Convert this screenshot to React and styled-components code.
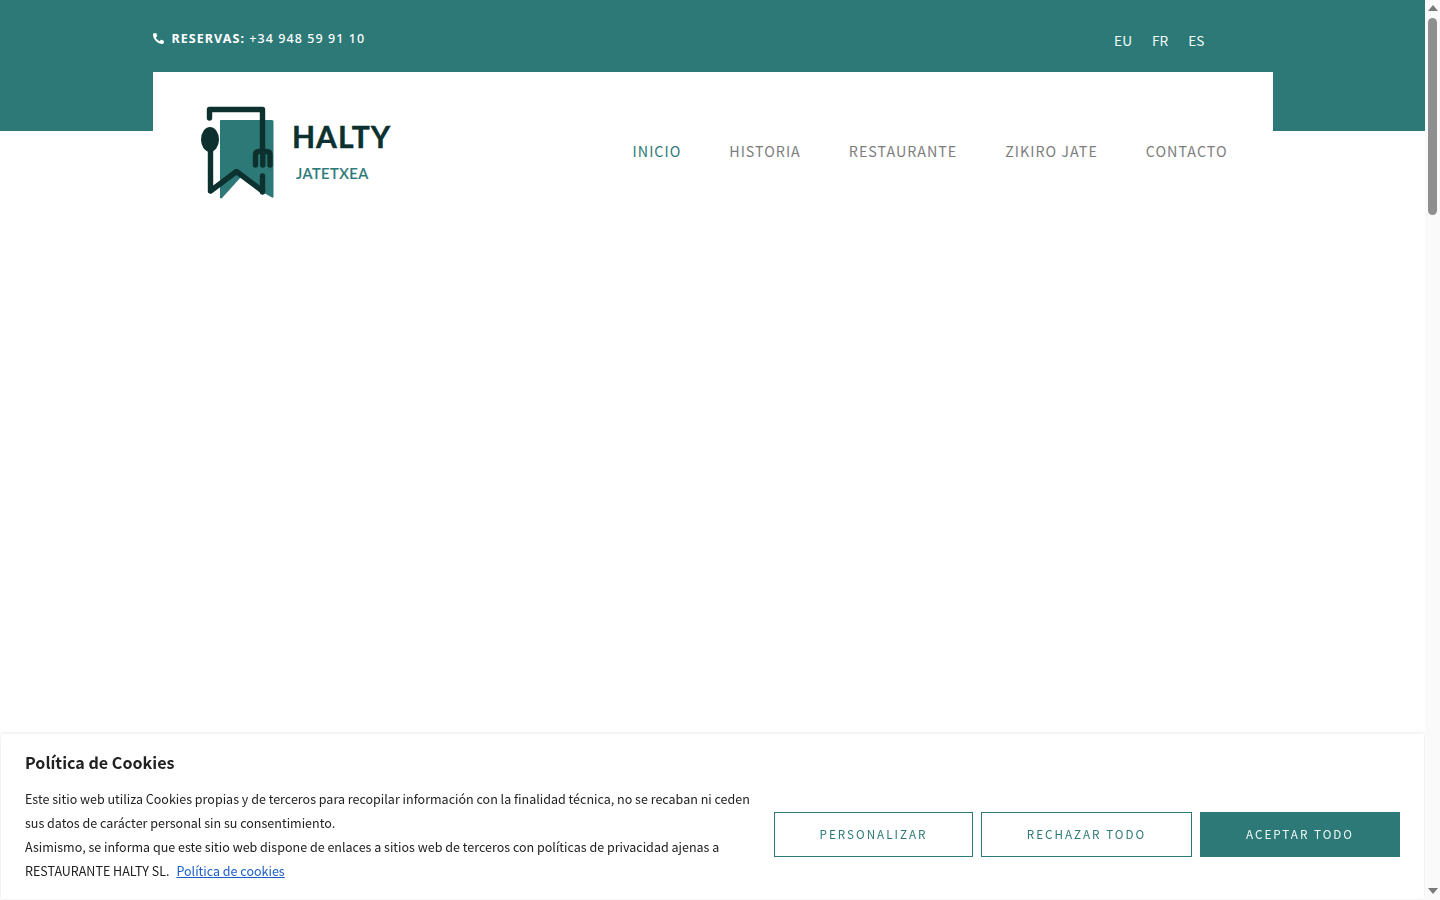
import styled, { createGlobalStyle } from 'styled-components';

const TEAL = '#2d7977';
const DARK = '#0c312e';
const BODY_FONT = '"Noto Sans CJK JP", "Noto Sans", sans-serif';

const navItems = ['INICIO', 'HISTORIA', 'RESTAURANTE', 'ZIKIRO JATE', 'CONTACTO'];
const languages = ['EU', 'FR', 'ES'];

const PhoneIcon = () => (
  <svg width="11" height="11" viewBox="0 0 512 512" fill="#fff">
    <path d="M493 24 389 0c-11-3-23 3-27 14l-48 112c-4 10-1 21 7 28l60 50c-36 77-99 140-176 176l-50-60c-7-8-18-11-28-7L14 361c-11 5-17 16-14 28l24 104c3 11 12 19 24 19 256 0 464-207 464-464 0-12-8-21-19-24z" transform="matrix(-1 0 0 1 512 0)" />
  </svg>
);

const LogoMark = () => (
  <svg width="85" height="105" viewBox="195 100 85 105">
    <path d="M221 120H272A1.500 1.500 0 0 1 273.500 121.500V196.500A1 1 0 0 1 272 197.500L264 193L241.500 176.500L222.500 197.500A1 1 0 0 1 220 196.500V121A1 1 0 0 1 221 120Z" fill={TEAL} />
    <g fill="none" stroke={DARK} strokeWidth="5.400" strokeLinecap="round" strokeLinejoin="round">
      <path d="M209.500 118V109.500H262.500V150" />
      <path d="M210.500 145V191L236.500 171.500L262.500 191" />
      <path d="M262.500 176V192" />
      <path d="M255.500 165V155Q255.500 151.500 259 151.500H266.500Q270 151.500 270 155V165" />
      <path d="M262.800 153V165" />
    </g>
    <ellipse cx="210" cy="139.500" rx="9" ry="12.500" fill={DARK} />
  </svg>
);

const App = () => (
  <>
    <GlobalStyle />
    <Band>
      <Container>
        <TopBar>
          <Phone>
            <PhoneIcon />
            <span>
              <strong>RESERVAS:</strong> +34 948 59 91 10
            </span>
          </Phone>
          <Languages>
            {languages.map(lang => (
              <LanguageLink key={lang}>{lang}</LanguageLink>
            ))}
          </Languages>
        </TopBar>
        <Header>
          <Logo>
            <LogoMark />
            <LogoText>
              <LogoName>HALTY</LogoName>
              <LogoSub>JATETXEA</LogoSub>
            </LogoText>
          </Logo>
          <Nav>
            {navItems.map((item, index) => (
              <NavLink key={item} $active={index === 0}>
                {item}
              </NavLink>
            ))}
          </Nav>
        </Header>
      </Container>
    </Band>
    <CookieBar>
      <CookieText>
        <CookieTitle>Política de Cookies</CookieTitle>
        <CookieCopy>
          Este sitio web utiliza Cookies propias y de terceros para recopilar información con la finalidad técnica, no se recaban ni ceden sus datos de carácter personal sin su consentimiento.
          <br />
          Asimismo, se informa que este sitio web dispone de enlaces a sitios web de terceros con políticas de privacidad ajenas a RESTAURANTE HALTY SL.
          <CookieLink>Política de cookies</CookieLink>
        </CookieCopy>
      </CookieText>
      <CookieButtons>
        <CookieButton $width={199}>PERSONALIZAR</CookieButton>
        <CookieButton $width={211}>RECHAZAR TODO</CookieButton>
        <CookieButton $width={200} $primary>ACEPTAR TODO</CookieButton>
      </CookieButtons>
    </CookieBar>
    <ScrollTrack>
      <ScrollArrow />
      <ScrollThumb />
      <ScrollArrow $down />
    </ScrollTrack>
  </>
);

const GlobalStyle = createGlobalStyle`
  body {
    margin: 0;
    min-height: 100vh;
    padding-right: 15px;
    background: #fff;
    font-family: ${BODY_FONT};
  }
`;

const Band = styled.div`
  height: 131px;
  background: ${TEAL};
`;

const Container = styled.div`
  width: 1120px;
  margin: 0 auto;
`;

const TopBar = styled.div`
  height: 72px;
  display: flex;
  justify-content: space-between;
  color: #fff;
`;

const Phone = styled.div`
  display: flex;
  align-items: center;
  gap: 8px;
  height: 76px;
  font-family: "Noto Sans", sans-serif;
  font-size: 12.5px;
  font-weight: 500;
  letter-spacing: 1.06px;

  & strong {
    font-weight: 700;
  }
`;

const Languages = styled.div`
  display: flex;
  gap: 20px;
  padding: 30px 68px 0 0;
`;

const LanguageLink = styled.a`
  font-size: 13.7px;
  line-height: 20px;
  color: #f2fbfa;
`;

const Header = styled.header`
  height: 160px;
  padding: 0 45px 0 48px;
  display: flex;
  justify-content: space-between;
  background: #fff;
`;

const Logo = styled.div`
  display: flex;
  align-items: flex-start;
  padding-top: 28px;
  margin-left: -6px;
`;

const LogoText = styled.div`
  display: flex;
  flex-direction: column;
  margin-left: 12.5px;
  padding-top: 18px;
`;

const LogoName = styled.span`
  font-family: Lato, sans-serif;
  font-size: 30px;
  font-weight: 700;
  line-height: 36px;
  letter-spacing: 1px;
  color: ${DARK};
  -webkit-text-stroke: 0.4px ${DARK};
`;

const LogoSub = styled.span`
  margin: 11px 0 0 4px;
  font-family: Lato, sans-serif;
  font-size: 14.7px;
  font-weight: 500;
  line-height: 17px;
  letter-spacing: 0.45px;
  color: ${TEAL};
  -webkit-text-stroke: 0.2px ${TEAL};
`;

const Nav = styled.nav`
  display: flex;
  gap: 48px;
  padding-top: 67px;
`;

const NavLink = styled.a`
  font-size: 14.3px;
  line-height: 24px;
  letter-spacing: 1px;
  color: ${({ $active }) => ($active ? TEAL : '#7d7d7d')};
`;

const CookieBar = styled.div`
  position: fixed;
  left: 1px;
  right: 16px;
  bottom: 1px;
  height: 165px;
  box-sizing: border-box;
  padding: 15px 24px 0;
  display: flex;
  align-items: flex-start;
  justify-content: space-between;
  background: #fff;
  box-shadow: 0 0 4px rgba(0, 0, 0, 0.12);
`;

const CookieText = styled.div`
  width: 733px;
`;

const CookieTitle = styled.h2`
  margin: 0 0 12px;
  font-size: 16.1px;
  font-weight: 700;
  line-height: 26px;
  color: #212121;
`;

const CookieCopy = styled.p`
  margin: 0;
  font-size: 12.52px;
  line-height: 24px;
  color: #212121;
`;

const CookieLink = styled.a`
  margin-left: 7px;
  color: #1a5fc8;
  text-decoration: underline;
`;

const CookieButtons = styled.div`
  display: flex;
  gap: 8px;
  margin-top: 63px;
`;

const CookieButton = styled.button`
  width: ${({ $width }) => $width}px;
  height: 45px;
  padding: 0 0 3px;
  border: 1px solid ${TEAL};
  border-radius: 0;
  background: ${({ $primary }) => ($primary ? TEAL : '#fff')};
  color: ${({ $primary }) => ($primary ? '#eef9f8' : TEAL)};
  font-family: ${BODY_FONT};
  font-size: 11.7px;
  letter-spacing: 2px;
`;

const ScrollTrack = styled.div`
  position: fixed;
  top: 0;
  right: 0;
  bottom: 0;
  width: 15px;
  display: flex;
  flex-direction: column;
  align-items: center;
  background: #fafafa;
`;

const ScrollArrow = styled.div`
  width: 0;
  height: 0;
  margin: ${({ $down }) => ($down ? 'auto 0 6px' : '5px 0 0')};
  border-left: 5px solid transparent;
  border-right: 5px solid transparent;
  border-top: ${({ $down }) => ($down ? '6px solid #7a7a7a' : 'none')};
  border-bottom: ${({ $down }) => ($down ? 'none' : '6px solid #7a7a7a')};
`;

const ScrollThumb = styled.div`
  width: 9px;
  height: 197px;
  margin-top: 7px;
  border-radius: 5px;
  background: #8f8f8f;
`;

export default App;
